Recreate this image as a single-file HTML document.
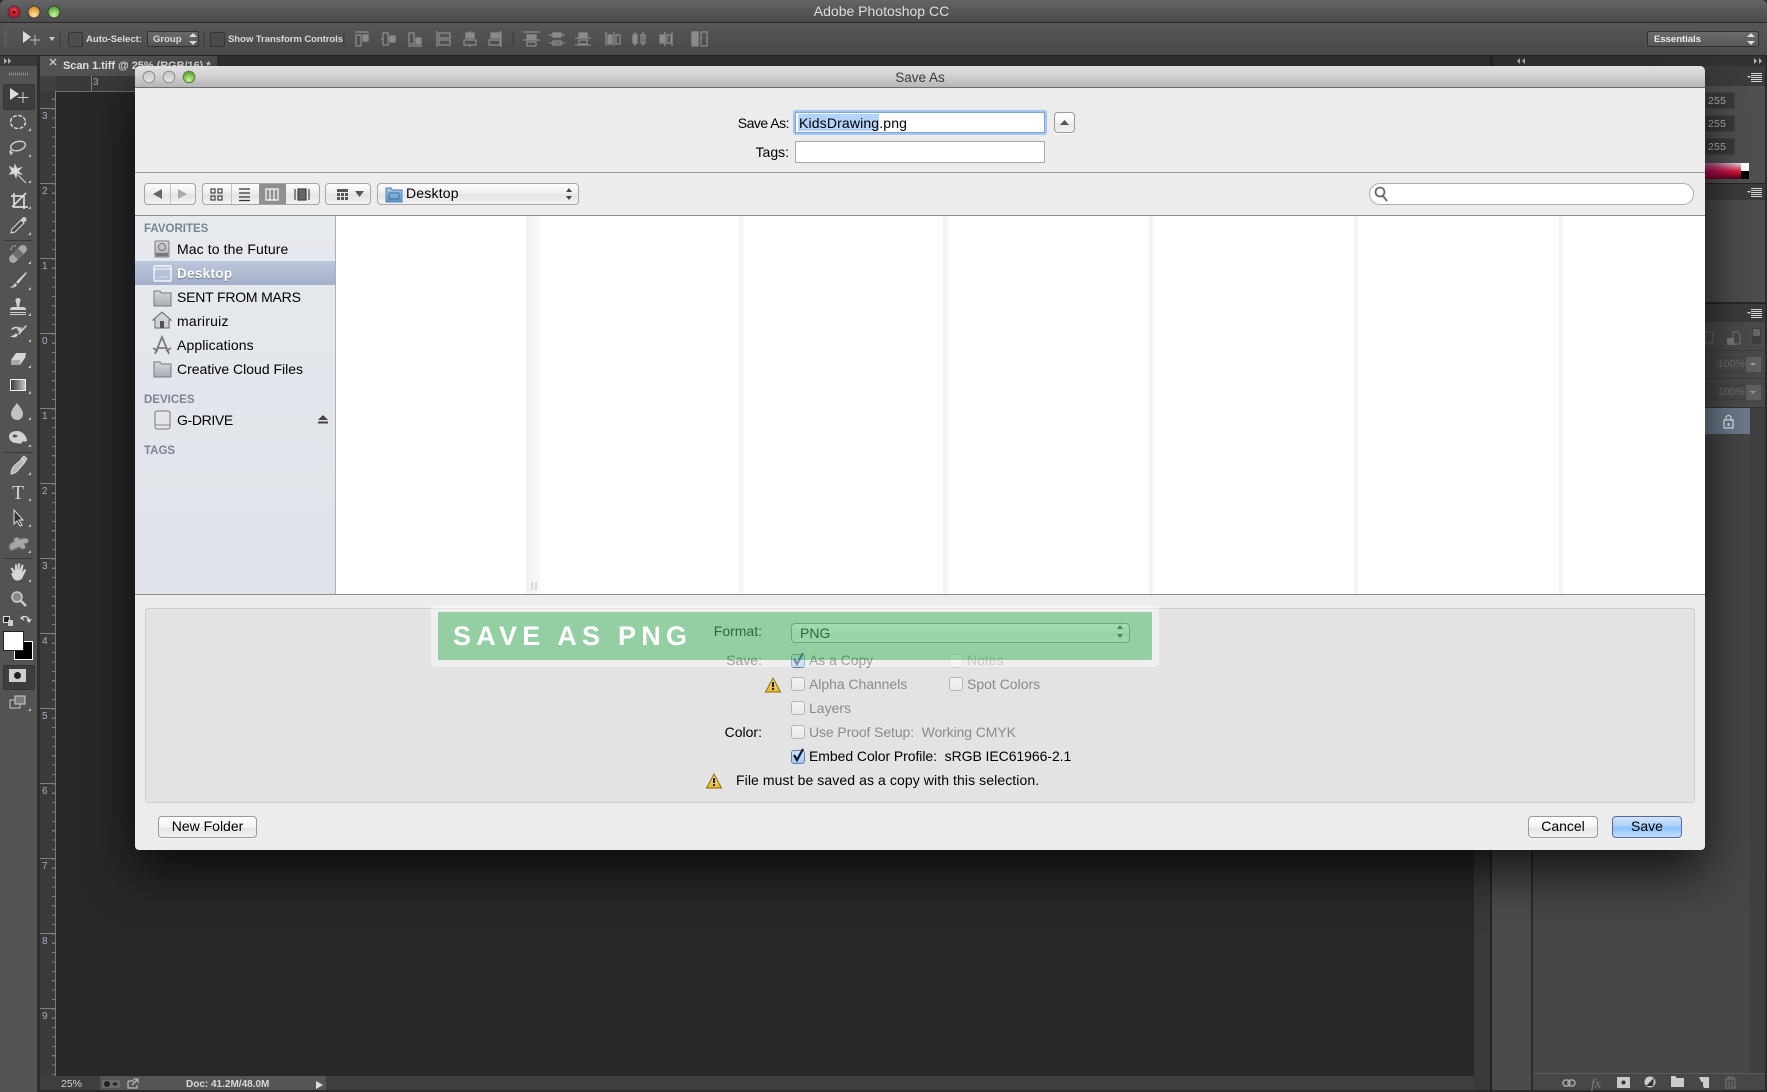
<!DOCTYPE html>
<html><head><meta charset="utf-8"><title>Adobe Photoshop CC - Save As</title>
<style>
html,body{margin:0;padding:0;background:#1c1c1c}
#p{position:relative;width:1767px;height:1092px;overflow:hidden;background:#2a2a2a;font-family:"Liberation Sans",sans-serif;font-size:14px;color:#000;filter:blur(.3px)}
#p div,#p svg{position:absolute}
.t{white-space:nowrap;line-height:16px;height:16px}
.o{font-size:9.6px;font-weight:bold;color:#dcdcdc;letter-spacing:-.05px}
.r{color:#9fb0c4;font-size:10px}
.s{font-size:14px;left:177px;color:#000;letter-spacing:.1px}
.h{font-size:11.5px;font-weight:bold;color:#7b8494;left:144px}
.l{text-align:right;right:1005px}
.g{color:#8b8b8b}
.cb{width:12px;height:12px;border:1px solid #b4b4b4;border-radius:3px;background:linear-gradient(#f4f4f4,#e8e8e8)}
.btn{border:1px solid #9a9a9a;border-radius:4px;background:linear-gradient(#fff,#f4f4f4 50%,#e6e6e6 55%,#f2f2f2);box-sizing:border-box;height:22px;text-align:center;line-height:18px;font-size:14px;color:#000;box-shadow:0 1px 0 rgba(255,255,255,.6)}
.seg{box-sizing:border-box;border:1px solid #a5a5a5;border-radius:4px;background:linear-gradient(#fdfdfd,#ececec 50%,#e2e2e2 52%,#f3f3f3);height:22px;top:183px}
.col{top:216px;height:378px;background:linear-gradient(90deg,#f1f1f1,#f9f9f9)}
.v{left:1705px;width:30px;height:17px;background:#3a3a3a;border:1px solid #474747;box-sizing:border-box;color:#b9b9b9;font-size:10.5px;line-height:16px;padding-left:2px;letter-spacing:.2px}
.pct{left:1713px;width:48px;height:15px;background:#4a4a4a;border:1px solid #404040;border-radius:2px;box-sizing:border-box;color:#6f6f6f;font-size:10.5px;line-height:13px;padding-left:4px}
</style></head>
<body><div id="p">

<!-- title bar -->
<div style="left:0;top:0;width:1767px;height:22px;background:linear-gradient(#646464,#4b4b4b);border-radius:5px 5px 0 0"></div>
<div style="left:0;top:22px;width:1767px;height:1px;background:#2a2a2a"></div>
<div class="t" style="left:0;width:1763px;text-align:center;top:3px;font-size:14px;color:#dedede">Adobe Photoshop CC</div>

<!-- options bar -->
<div style="left:0;top:23px;width:1767px;height:32px;background:linear-gradient(#575757,#4c4c4c)"></div>
<div style="left:0;top:55px;width:1767px;height:1px;background:#262626"></div>
<div style="left:68px;top:32px;width:13px;height:13px;background:#4d4d4d;border:1px solid #363636;border-radius:2px"></div>
<div class="t o" style="left:86px;top:32px">Auto-Select:</div>
<div style="left:147px;top:31px;width:52px;height:16px;box-sizing:border-box;background:linear-gradient(#6a6a6a,#585858);border:1px solid #333;border-radius:2px"></div>
<div class="t o" style="left:153px;top:32px">Group</div>
<div style="left:210px;top:32px;width:13px;height:13px;background:#4d4d4d;border:1px solid #363636;border-radius:2px"></div>
<div class="t o" style="left:228px;top:32px;letter-spacing:-.1px">Show Transform Controls</div>
<div style="left:1647px;top:31px;width:112px;height:16px;box-sizing:border-box;background:linear-gradient(#6c6c6c,#595959);border:1px solid #333;border-radius:2px"></div>
<div class="t o" style="left:1654px;top:32px;color:#eee">Essentials</div>

<!-- strip below options -->
<div style="left:0;top:56px;width:37px;height:10px;background:#3a3a3a"></div>
<div style="left:40px;top:56px;width:1450px;height:20px;background:#323232"></div>
<div style="left:1493px;top:56px;width:274px;height:10px;background:#333"></div>
<div style="left:40px;top:56px;width:177px;height:20px;background:#525252"></div>
<div class="t o" style="left:63px;top:58px;font-size:11px;color:#e0e0e0">Scan 1.tiff @ 25% (RGB/16) *</div>

<!-- left toolbar -->
<div style="left:0;top:66px;width:37px;height:1026px;background:#535353"></div>
<div style="left:37px;top:56px;width:3px;height:1036px;background:#2e2e2e"></div>
<div style="left:3px;top:84px;width:30px;height:24px;background:#3d3d3d;border:1px solid #343434;border-radius:2px"></div>
<div style="left:3px;top:665px;width:30px;height:23px;background:#3d3d3d;border:1px solid #343434;border-radius:2px"></div>
<div style="left:4px;top:240px;width:29px;height:1px;background:#383838"></div>
<div style="left:4px;top:452px;width:29px;height:1px;background:#383838"></div>
<div style="left:4px;top:558px;width:29px;height:1px;background:#383838"></div>
<div style="left:14px;top:641px;width:17px;height:17px;background:#000;border:1px solid #fff"></div>
<div style="left:3px;top:631px;width:19px;height:18px;background:#fff;border:1px solid #222"></div>

<!-- ruler -->
<div style="left:40px;top:76px;width:16px;height:1000px;background:#3a3a3a"></div>
<div style="left:56px;top:76px;width:1440px;height:15px;background:#3a3a3a"></div>
<div style="left:40px;top:76px;width:16px;height:15px;background:#404040"></div>
<div style="left:52px;top:91px;width:4px;height:985px;background:repeating-linear-gradient(#7a7a7a 0 1px,transparent 1px 9.375px);background-position:0 8px"></div>
<div style="left:40px;top:108px;width:16px;height:968px;background:repeating-linear-gradient(#808080 0 1px,transparent 1px 75px)"></div>
<div style="left:55px;top:91px;width:1px;height:985px;background:#7a7a7a"></div>
<div style="left:56px;top:91px;width:1440px;height:1px;background:#6e6e6e"></div>
<div style="left:91px;top:76px;width:1px;height:15px;background:#808080"></div>
<div class="t r" style="left:42px;top:109px">3</div>
<div class="t r" style="left:42px;top:184px">2</div>
<div class="t r" style="left:42px;top:259px">1</div>
<div class="t r" style="left:42px;top:334px">0</div>
<div class="t r" style="left:42px;top:409px">1</div>
<div class="t r" style="left:42px;top:484px">2</div>
<div class="t r" style="left:42px;top:559px">3</div>
<div class="t r" style="left:42px;top:634px">4</div>
<div class="t r" style="left:42px;top:709px">5</div>
<div class="t r" style="left:42px;top:784px">6</div>
<div class="t r" style="left:42px;top:859px">7</div>
<div class="t r" style="left:42px;top:934px">8</div>
<div class="t r" style="left:42px;top:1009px">9</div>
<div class="t r" style="left:93px;top:75px">3</div>

<!-- canvas area -->
<div style="left:56px;top:92px;width:1418px;height:984px;background:#282828"></div>
<div style="left:1474px;top:76px;width:16px;height:1014px;background:#3a3a3a"></div>
<div style="left:1490px;top:56px;width:2px;height:1036px;background:#252525"></div>
<div style="left:1492px;top:66px;width:39px;height:1024px;background:#4b4b4b"></div>
<div style="left:1531px;top:66px;width:2px;height:1026px;background:#2b2b2b"></div>

<!-- status bar -->
<div style="left:40px;top:1076px;width:1434px;height:14px;background:#3e3e3e"></div>
<div style="left:100px;top:1076px;width:226px;height:14px;background:#555"></div>
<div class="t" style="left:61px;top:1077px;font-size:10.5px;color:#d4d4d4;line-height:15px">25%</div>
<div class="t" style="left:186px;top:1077px;font-size:10px;font-weight:bold;color:#d8d8d8;line-height:15px">Doc: 41.2M/48.0M</div>

<!-- right panels -->
<div style="left:1533px;top:66px;width:232px;height:1024px;background:#464646"></div>
<div style="left:1765px;top:56px;width:2px;height:1036px;background:#2c2c2c"></div>
<div style="left:1533px;top:66px;width:232px;height:20px;background:#3c3c3c"></div>
<div style="left:1533px;top:86px;width:232px;height:97px;background:#505050"></div>
<div style="left:1533px;top:183px;width:232px;height:1px;background:#262626"></div>
<div style="left:1533px;top:184px;width:232px;height:16px;background:#3c3c3c"></div>
<div style="left:1533px;top:200px;width:232px;height:102px;background:linear-gradient(90deg,#3f3f3f,#4e4e4e)"></div>
<div style="left:1533px;top:302px;width:232px;height:2px;background:#272727"></div>
<div style="left:1533px;top:304px;width:232px;height:18px;background:#3c3c3c"></div>
<div style="left:1533px;top:322px;width:232px;height:85px;background:#4a4a4a"></div>
<div style="left:1533px;top:350px;width:232px;height:1px;background:#3c3c3c"></div>
<div style="left:1533px;top:378px;width:232px;height:1px;background:#3c3c3c"></div>
<div style="left:1533px;top:407px;width:232px;height:1px;background:#333"></div>
<div style="left:1533px;top:408px;width:217px;height:26px;background:#6c7a8c"></div>
<div style="left:1750px;top:408px;width:15px;height:665px;background:#3f3f3f"></div>
<div style="left:1533px;top:1073px;width:232px;height:17px;background:#474747;border-top:1px solid #5c5c5c;box-sizing:border-box"></div>
<div class="v" style="top:92px">255</div>
<div class="v" style="top:115px">255</div>
<div class="v" style="top:138px">255</div>
<div style="left:1560px;top:163px;width:189px;height:16px;background:linear-gradient(#eee,#e81f3c 50%,#4a0012);"></div>
<div style="left:1560px;top:163px;width:181px;height:16px;background:linear-gradient(90deg,rgba(90,0,120,1),rgba(150,0,90,.55) 85%,rgba(255,0,0,0));"></div>
<div style="left:1741px;top:163px;width:8px;height:8px;background:#fff"></div>
<div style="left:1741px;top:171px;width:8px;height:8px;background:#000"></div>
<div style="left:1752px;top:328px;width:9px;height:16px;background:#3d3d3d;border:1px solid #404040;box-sizing:border-box"></div>
<div style="left:1753px;top:329px;width:7px;height:7px;background:#666"></div>
<div class="pct" style="top:357px">100%</div>
<div class="pct" style="top:385px">100%</div>
<div style="left:1746px;top:357px;width:15px;height:15px;background:#606060"></div>
<div style="left:1746px;top:385px;width:15px;height:15px;background:#606060"></div>

<!-- base icons -->
<svg style="left:0;top:0" width="1767" height="1092" viewBox="0 0 1767 1092">
<defs>
<radialGradient id="rd" cx=".5" cy=".4" r=".6"><stop offset="0" stop-color="#ff8a9a"/><stop offset=".35" stop-color="#d8203a"/><stop offset="1" stop-color="#a3162a"/></radialGradient>
<radialGradient id="yl" cx=".5" cy=".75" r=".7"><stop offset="0" stop-color="#ffe39a"/><stop offset="1" stop-color="#d88a24"/></radialGradient>
<radialGradient id="gn" cx=".5" cy=".75" r=".7"><stop offset="0" stop-color="#c8f59a"/><stop offset="1" stop-color="#4ea32c"/></radialGradient>
<linearGradient id="gr" x1="0" x2="1"><stop offset="0" stop-color="#333"/><stop offset="1" stop-color="#ccc"/></linearGradient>
</defs>
<circle cx="14" cy="12" r="6" fill="url(#rd)" stroke="#3a3a3a"/><circle cx="14" cy="12" r="1.6" fill="#5a0410"/>
<circle cx="34" cy="12" r="6" fill="url(#yl)" stroke="#3a3a3a"/>
<circle cx="54" cy="12" r="6" fill="url(#gn)" stroke="#3a3a3a"/>
<!-- options icons -->
<path d="M4.500 30v17M6.500 30v17" stroke="#6e6e6e" stroke-dasharray="1 1" fill="none"/>
<g fill="#9a9a9a" stroke="none">
<polygon points="23,31 23,43 31,37" fill="#dcdcdc"/>
<path d="M35 35v10M30 40h10" stroke="#bbb" fill="none"/>
<polygon points="49,37 55,37 52,41" fill="#ccc"/>
<polygon points="189,37 193,33 197,37" fill="#ddd"/><polygon points="189,41 197,41 193,45" fill="#ddd"/>
<polygon points="1747,37 1751,33 1755,37" fill="#ddd"/><polygon points="1747,41 1755,41 1751,45" fill="#ddd"/>
</g>
<path d="M60 31v16M204 31v16M344 31v16M513 31v16" stroke="#3c3c3c"/>
<g fill="none" stroke="#8d8d8d" stroke-width="1.3">
<path d="M355 32h14"/><rect x="356" y="35" width="5" height="11"/><rect x="363" y="35" width="5" height="6" fill="#8d8d8d"/>
<path d="M381 39h15"/><rect x="383" y="33" width="5" height="12" fill="#4f4f4f"/><rect x="390" y="36" width="5" height="6" fill="#8d8d8d"/>
<path d="M408 46h14"/><rect x="409" y="33" width="5" height="11"/><rect x="416" y="38" width="5" height="6" fill="#8d8d8d"/>
<path d="M437 31v16"/><rect x="439" y="33" width="11" height="5" fill="none"/><rect x="439" y="40" width="11" height="5"/>
<path d="M470 31v16"/><rect x="466" y="33" width="8" height="5" fill="#8d8d8d"/><rect x="464" y="40" width="12" height="5" fill="#4f4f4f"/>
<path d="M501 31v16"/><rect x="491" y="33" width="9" height="5" fill="#8d8d8d"/><rect x="489" y="40" width="11" height="5"/>
<path d="M523 32h17"/><rect x="527" y="35" width="9" height="4" fill="#8d8d8d"/><path d="M523 40h17"/><rect x="527" y="42" width="9" height="4"/>
<path d="M549 35h16M549 43h16"/><rect x="553" y="33" width="8" height="4" fill="#8d8d8d"/><rect x="553" y="41" width="8" height="4"/>
<path d="M575 45h16M575 38h16"/><rect x="579" y="33" width="8" height="4" fill="#8d8d8d"/><rect x="579" y="40" width="8" height="4"/>
<path d="M606 32v14"/><rect x="608" y="35" width="4" height="9" fill="#8d8d8d"/><path d="M614 32v14"/><rect x="616" y="35" width="4" height="9"/>
<path d="M635 32v14M643 32v14"/><rect x="633" y="35" width="4" height="8" fill="#8d8d8d"/><rect x="641" y="35" width="4" height="8"/>
<path d="M665 32v14M672 32v14"/><rect x="660" y="35" width="4" height="8" fill="#8d8d8d"/><rect x="667" y="35" width="4" height="8"/>
<rect x="692" y="32" width="6" height="14" fill="#8d8d8d"/><rect x="701" y="32" width="6" height="14"/>
</g>
<!-- strip glyphs -->
<g fill="#b5b5b5">
<polygon points="4,58 4,64 7,61"/><polygon points="8,58 8,64 11,61"/>
<polygon points="1520,58 1520,64 1517,61"/><polygon points="1525,58 1525,64 1522,61"/>
<polygon points="1754,58 1754,64 1757,61"/><polygon points="1759,58 1759,64 1762,61"/>
</g>
<path d="M50 62l6 6M56 62l-6 6" stroke="#ccc" stroke-width="1.3" fill="none" transform="translate(0,-3)"/>
<path d="M9 74h19" stroke="#8d8d8d" stroke-width="3" stroke-dasharray="1 1"/>
<!-- tool icons -->
<polygon points="10,88 10,100 19,94" fill="#dcdcdc"/>
<path d="M23 92v11M17.500 97.500h11" stroke="#d0d0d0" fill="none"/>
<g fill="#bdbdbd"><polygon points="31,131 28,131 31,128"/><polygon points="31,157 28,157 31,154"/><polygon points="31,183 28,183 31,180"/><polygon points="31,209 28,209 31,206"/><polygon points="31,235 28,235 31,232"/><polygon points="31,264 28,264 31,261"/><polygon points="31,290 28,290 31,287"/><polygon points="31,316 28,316 31,313"/><polygon points="31,342 28,342 31,339"/><polygon points="31,368 28,368 31,365"/><polygon points="31,394 28,394 31,391"/><polygon points="31,420 28,420 31,417"/><polygon points="31,447 28,447 31,444"/><polygon points="31,475 28,475 31,472"/><polygon points="31,501 28,501 31,498"/><polygon points="31,527 28,527 31,524"/><polygon points="31,553 28,553 31,550"/><polygon points="31,582 28,582 31,579"/><polygon points="31,711 28,711 31,708"/></g>
<ellipse cx="18" cy="122" rx="7.500" ry="6.500" fill="none" stroke="#e4e4e4" stroke-width="1.300" stroke-dasharray="4 1.500"/>
<g fill="none" stroke="#c8c8c8" stroke-width="1.500"><ellipse cx="18" cy="146" rx="7.500" ry="4.500" transform="rotate(-15 18 146)"/><path d="M11 150c-2 2 0 4 1 3s-2-2-1 2"/></g>
<path d="M10 167l4 2 1-4 2 4 4-1-3 3 3 3-4-1-1 4-2-4-4 1 2-3zM18 175l8 8" fill="#dedede" stroke="#cfcfcf" stroke-width="1.200"/>
<path d="M14 193v14h14M11 196h13v13M26 193l-14 14" fill="none" stroke="#d8d8d8" stroke-width="1.700"/>
<path d="M11 233l1-4 9-9 3 3-9 9z" fill="#4a4a4a" stroke="#ddd"/><circle cx="24" cy="219.500" r="2.500" fill="#ccc"/>
<g transform="rotate(-45 18 254)"><rect x="7" y="250" width="22" height="8" rx="4" fill="#a8a8a8"/><rect x="14" y="250" width="8" height="8" fill="#6e6e6e"/></g>
<path d="M11 250a4 4 0 0 1 5-4" stroke="#ddd" fill="none" stroke-dasharray="1.500 1.500"/>
<path d="M9 287c3 0 4-1 6-4l2 2c-2 3-5 3-8 2zM16 282l10-10 1 1-9 11z" fill="#cfcfcf"/>
<g transform="translate(0,2)"><path d="M16 300a2.500 2.500 0 1 1 4 0l-1 5h4c2 0 3 1 3 3H10c0-2 1-3 3-3h4zM10 310h16v1H10zM10 312h16v1H10z" fill="#d2d2d2"/></g>
<g transform="translate(0,2)"><path d="M10 334c3 0 4-1 6-3l2 2c-2 3-5 3-8 1zM18 331l8-8 1 1-8 9zM11 327c3-3 6-3 9-1l1-2 1 5-5 0 1-2c-2-1-4-1-5 1z" fill="#cfcfcf"/></g>
<g transform="translate(0,2)"><polygon points="11,356 16,349 26,349 25,354 20,361 11,361" fill="#d6d6d6" transform="translate(0,2)"/><polygon points="11,358 20,358 20,363 11,363" fill="#a8a8a8"/></g>
<rect x="10.500" y="379.500" width="15" height="11" fill="url(#gr)" stroke="#eee"/>
<path d="M17 403c3 4 6 7 6 11a6 6 0 0 1-12 0c0-4 3-7 6-11z" fill="#c2c2c2"/>
<g transform="translate(0,3)"><path d="M9 433c0-3 4-5 8-5 5 0 9 4 10 9 0 2-2 2-4 1-1 3-4 3-7 2-4 0-7-3-7-7z" fill="#d2d2d2"/><ellipse cx="15" cy="433" rx="2.500" ry="1.500" fill="#555"/></g>
<g transform="translate(0,1)"><path d="M11 473c0-4 2-7 4-9l7-6 3 3-6 7c-2 3-5 5-8 5zM21 458l3-3 3 3-3 3" fill="#b5b5b5" stroke="#ddd" stroke-width="1"/></g>
<text x="18" y="499" text-anchor="middle" font-family="Liberation Serif,serif" font-size="20" fill="#cfcfcf">T</text>
<path d="M14 510v14l3-3 3 5 2-1-3-5 4 0z" fill="#333" stroke="#ddd"/>
<g transform="translate(-5.500,-40.500) scale(1.300 1.080)"><path d="M12 541l3-2c-1-3 2-5 4-3l1 1c2-2 5-1 6 0 1 2-1 4-3 4l1 3c-1 3-4 2-5 0-2 1-4 3-6 3-2-1-2-4-1-6z" fill="#a6a6a6" stroke="#777"/></g>
<g transform="translate(2,3)"><path d="M11 570l-2-4c-1-1 1-2 2-1l2 3v-6c0-1 2-1 2 0v5l1-6c0-1 2-1 2 0l-.500 6 2-5c.500-1 2-.500 2 .500l-1.500 7 2-3c1-1 2 0 2 1l-3 6c-1 3-3 4-6 4s-4-2-6-7z" fill="#d4d4d4"/></g>
<circle cx="17" cy="597" r="5" fill="#8a8a8a" stroke="#cdcdcd" stroke-width="1.500"/><path d="M21 601l5 5" stroke="#cdcdcd" stroke-width="2.500"/>
<rect x="3.500" y="616.500" width="6" height="6" fill="#222" stroke="#ddd"/><rect x="8" y="620" width="5" height="6" fill="#ccc"/>
<path d="M22 618c3-3 7-1 7 3M27 619l2 3 2-3M24 616l-3 2 3 2" fill="none" stroke="#ddd" stroke-width="1.200"/>
<rect x="9" y="669" width="17" height="13" fill="#d0d0d0"/><circle cx="17.500" cy="675.500" r="3.500" fill="#222"/>
<rect x="10" y="700" width="10" height="8" fill="none" stroke="#c8c8c8"/><rect x="15" y="696" width="10" height="8" fill="#7a7a7a" stroke="#d0d0d0"/>
<!-- status -->
<rect x="102" y="1080" width="18" height="8" fill="#6a6a6a" rx="1"/><circle cx="107" cy="1084" r="3" fill="#222"/><path d="M112 1084l3-2v4zM118 1084l-3-2v4z" fill="#222"/>
<path d="M128 1081h6M128 1081v7h9v-3M132 1085l5-5M133 1079h5v4" fill="none" stroke="#ccc"/>
<polygon points="316,1081 316,1089 323,1085" fill="#ddd"/>
<!-- panel glyphs -->
<g fill="#d8d8d8">
<path d="M1751 73h11v1h-11zM1751 75h11v1h-11zM1751 77h11v1h-11zM1751 79h11v1h-11zM1751 81h11v1h-11zM1747 76h4l-2 2z"/>
<path d="M1751 188h11v1h-11zM1751 190h11v1h-11zM1751 192h11v1h-11zM1751 194h11v1h-11zM1751 196h11v1h-11zM1747 191h4l-2 2z"/>
<path d="M1751 309h11v1h-11zM1751 311h11v1h-11zM1751 313h11v1h-11zM1751 315h11v1h-11zM1751 317h11v1h-11zM1747 312h4l-2 2z"/>
</g>
<polygon points="1750,363 1756,363 1753,366" fill="#999"/><polygon points="1750,391 1756,391 1753,394" fill="#999"/>
<rect x="1705" y="332" width="8" height="11" fill="none" stroke="#6a6a6a"/>
<path d="M1733 332h5l2 3v9h-7z" fill="none" stroke="#777"/><rect x="1727" y="338" width="7" height="7" fill="#777"/>
<rect x="1724" y="420" width="9" height="8" fill="none" stroke="#dfe4ea" stroke-width="1.300"/><path d="M1726 420v-2a2.500 2.500 0 0 1 5 0v2" fill="none" stroke="#dfe4ea" stroke-width="1.300"/><rect x="1727.500" y="423" width="2" height="3" fill="#dfe4ea"/>
<!-- bottom layer icons -->
<g fill="none" stroke="#a8a8a8" stroke-width="1.500"><rect x="1563" y="1080" width="7" height="6" rx="3"/><rect x="1568" y="1080" width="7" height="6" rx="3"/></g>
<text x="1591" y="1088" font-family="Liberation Serif,serif" font-style="italic" font-size="14" fill="#7d7d7d">fx</text>
<rect x="1617" y="1077" width="13" height="11" fill="#c8c8c8"/><circle cx="1623.500" cy="1082.500" r="2" fill="#333"/>
<circle cx="1650" cy="1082" r="5.500" fill="#ccc"/><path d="M1646 1086l8-8-1 8z" fill="#333"/>
<path d="M1671 1087v-11h4l2 2h7v9z" fill="#ccc"/>
<path d="M1699 1077h10v11h-5z" fill="#ccc"/><path d="M1699 1082h4v5z" fill="#444"/>
<path d="M1725 1079h11M1728 1079v-2h5v2M1726 1080v8h9v-8M1729 1081v6M1732 1081v6" fill="none" stroke="#777"/>
</svg>

<!-- DIALOG -->
<div style="left:135px;top:66px;width:1570px;height:784px;background:#ececec;border-radius:5px 5px 4px 4px;box-shadow:0 22px 50px rgba(0,0,0,.72)"></div>
<div style="left:135px;top:66px;width:1570px;height:21px;background:linear-gradient(#e2e2e2,#cfcfcf 50%,#b6b6b6);border-radius:5px 5px 0 0"></div>
<div style="left:135px;top:87px;width:1570px;height:1px;background:#6f6f6f"></div>
<div class="t" style="left:135px;width:1570px;top:70px;text-align:center;font-size:13.5px;color:#3a3a3a">Save As</div>

<div class="t l" style="top:115px;right:978px;letter-spacing:-.5px">Save As:</div>
<div style="left:795px;top:112px;width:250px;height:21px;box-sizing:border-box;background:#fff;border:1px solid #7aa7e2;box-shadow:0 0 0 2px #a5c5ef;border-radius:1px"></div>
<div style="left:798px;top:114px;width:81px;height:17px;background:#b3d3fb"></div>
<div class="t" style="left:799px;top:115px;letter-spacing:.15px">KidsDrawing.png</div>
<div class="btn" style="left:1054px;top:112px;width:21px;height:21px"></div>
<div class="t l" style="top:144px;right:978px">Tags:</div>
<div style="left:795px;top:141px;width:250px;height:22px;box-sizing:border-box;background:#fff;border:1px solid #aaa"></div>

<div style="left:135px;top:172px;width:1570px;height:1px;background:#9a9a9a"></div>
<div style="left:135px;top:215px;width:1570px;height:1px;background:#8f8f8f"></div>
<div class="seg" style="left:144px;width:52px"></div>
<div style="left:170px;top:184px;width:1px;height:20px;background:#c4c4c4"></div>
<div class="seg" style="left:202px;width:118px"></div>
<div style="left:259px;top:184px;width:27px;height:20px;background:#8f8f8f"></div>
<div style="left:231px;top:184px;width:1px;height:20px;background:#c4c4c4"></div>
<div class="seg" style="left:325px;width:46px"></div>
<div class="seg" style="left:377px;width:202px"></div>
<div class="t" style="left:406px;top:185px;letter-spacing:.2px">Desktop</div>
<div style="left:1369px;top:183px;width:325px;height:22px;box-sizing:border-box;background:#fff;border:1px solid #adadad;border-radius:11px"></div>

<!-- sidebar -->
<div style="left:135px;top:216px;width:200px;height:378px;background:linear-gradient(#e6e9ee,#dfe3e9)"></div>
<div style="left:335px;top:216px;width:1px;height:378px;background:#b0b0b0"></div>
<div style="left:135px;top:261px;width:200px;height:24px;background:linear-gradient(#bcc6dc,#a3aeca)"></div>
<div class="t h" style="top:221px">FAVORITES</div>
<div class="t s" style="top:241px">Mac to the Future</div>
<div class="t s" style="top:266px;color:#fff;font-weight:bold;text-shadow:0 1px 1px rgba(60,70,100,.6);font-size:13.5px;letter-spacing:.3px">Desktop</div>
<div class="t s" style="top:289px;letter-spacing:-.2px">SENT FROM MARS</div>
<div class="t s" style="top:313px;letter-spacing:.25px">mariruiz</div>
<div class="t s" style="top:337px">Applications</div>
<div class="t s" style="top:361px;letter-spacing:0">Creative Cloud Files</div>
<div class="t h" style="top:392px">DEVICES</div>
<div class="t s" style="top:412px;letter-spacing:-.35px">G-DRIVE</div>
<div class="t h" style="top:443px">TAGS</div>

<!-- browser columns -->
<div style="left:336px;top:216px;width:1369px;height:378px;background:#fff"></div>
<div class="col" style="left:526px;width:14px"></div>
<div class="col" style="left:739px;width:5px"></div>
<div class="col" style="left:943px;width:5px"></div>
<div class="col" style="left:1149px;width:5px"></div>
<div class="col" style="left:1354px;width:5px"></div>
<div class="col" style="left:1559px;width:5px"></div>
<div style="left:135px;top:594px;width:1570px;height:1px;background:#8f8f8f"></div>

<!-- accessory panel -->
<div style="left:145px;top:608px;width:1550px;height:195px;box-sizing:border-box;background:#e3e3e3;border:1px solid #cdcdcd;border-radius:3px"></div>
<div class="t l" style="top:623px;color:#000">Format:</div>
<div style="left:791px;top:623px;width:339px;height:20px;box-sizing:border-box;background:linear-gradient(#fff,#f2f2f2 50%,#e8e8e8 52%,#f6f6f6);border:1px solid #8e8e8e;border-radius:4px"></div>
<div class="t" style="left:800px;top:625px">PNG</div>
<div class="t l" style="top:652px;color:#5f5f5f">Save:</div>
<div class="cb" style="left:791px;top:654px;background:linear-gradient(#cfe3fb,#9cc3ef);border-color:#6a7fa5"></div>
<div class="t" style="left:809px;top:652px;letter-spacing:-.05px;color:#5f5f5f">As a Copy</div>
<div class="cb" style="left:949px;top:654px;border-color:#cfcfcf"></div>
<div class="t" style="left:967px;top:652px;color:#a8a8a8">Notes</div>
<div class="cb" style="left:791px;top:677px"></div>
<div class="t g" style="left:809px;top:676px;letter-spacing:-.05px">Alpha Channels</div>
<div class="cb" style="left:949px;top:677px"></div>
<div class="t g" style="left:967px;top:676px">Spot Colors</div>
<div class="cb" style="left:791px;top:701px"></div>
<div class="t g" style="left:809px;top:700px">Layers</div>
<div class="t l" style="top:724px">Color:</div>
<div class="cb" style="left:791px;top:725px"></div>
<div class="t g" style="left:809px;top:724px;letter-spacing:-.1px">Use Proof Setup:&nbsp; Working CMYK</div>
<div class="cb" style="left:791px;top:750px;background:linear-gradient(#d4e6fb,#a3c9f2);border-color:#6a7fa5"></div>
<div class="t" style="left:809px;top:748px;letter-spacing:-.06px">Embed Color Profile:&nbsp; sRGB IEC61966-2.1</div>
<div class="t" style="left:736px;top:772px;letter-spacing:.09px">File must be saved as a copy with this selection.</div>

<!-- dialog buttons -->
<div class="btn" style="left:158px;top:816px;width:99px">New Folder</div>
<div class="btn" style="left:1528px;top:816px;width:70px">Cancel</div>
<div class="btn" style="left:1612px;top:816px;width:70px;border-color:#5f62ad;background:linear-gradient(#d3e6fc,#a9d0fa 45%,#8cc0f6 55%,#c4e2ff)">Save</div>

<!-- dialog icons -->
<svg style="left:0;top:0" width="1767" height="1092" viewBox="0 0 1767 1092">
<defs>
<linearGradient id="fd" x1="0" y1="0" x2="0" y2="1"><stop offset="0" stop-color="#d6d8dc"/><stop offset="1" stop-color="#a9adb4"/></linearGradient>
<linearGradient id="fb" x1="0" y1="0" x2="0" y2="1"><stop offset="0" stop-color="#a7cbe8"/><stop offset="1" stop-color="#5d93c4"/></linearGradient>
<linearGradient id="wn" x1="0" y1="0" x2="0" y2="1"><stop offset="0" stop-color="#fbe58a"/><stop offset="1" stop-color="#e6b52c"/></linearGradient>
<radialGradient id="g2" cx=".5" cy=".75" r=".7"><stop offset="0" stop-color="#c8f59a"/><stop offset="1" stop-color="#4ea32c"/></radialGradient>
<linearGradient id="t2" x1="0" y1="0" x2="0" y2="1"><stop offset="0" stop-color="#c4c4c4"/><stop offset="1" stop-color="#e6e6e6"/></linearGradient>
</defs>
<circle cx="149" cy="77" r="5.800" fill="url(#t2)" stroke="#8e8e8e"/>
<circle cx="169" cy="77" r="5.800" fill="url(#t2)" stroke="#8e8e8e"/>
<circle cx="189" cy="77" r="5.800" fill="url(#g2)" stroke="#5d7a4a"/>
<polygon points="1060,125 1069,125 1064.500,120" fill="#555"/>
<!-- toolbar glyphs -->
<polygon points="153,194 162,189 162,199" fill="#666"/>
<polygon points="178,189 178,199 187,194" fill="#aaa"/>
<g fill="none" stroke="#444" stroke-width="1.200">
<rect x="211" y="189" width="4" height="4"/><rect x="218" y="189" width="4" height="4"/><rect x="211" y="196" width="4" height="4"/><rect x="218" y="196" width="4" height="4"/>
<path d="M239 189h11M239 193h11M239 197h11M239 200.500h11" stroke="#333"/>
</g>
<g fill="none" stroke="#fff" stroke-width="1.200"><rect x="266" y="189" width="12" height="11"/><path d="M270 189v11M274 189v11"/></g>
<g fill="none" stroke="#444" stroke-width="1.200"><path d="M295 189v11M309 189v11"/><rect x="298" y="189" width="8" height="11" fill="#666"/></g>
<g fill="#555"><rect x="337" y="189" width="11" height="3"/><rect x="337" y="193" width="3" height="3"/><rect x="341" y="193" width="3" height="3"/><rect x="345" y="193" width="3" height="3"/><rect x="337" y="197" width="3" height="3"/><rect x="341" y="197" width="3" height="3"/><rect x="345" y="197" width="3" height="3"/><polygon points="355,191 364,191 359.500,197"/></g>
<path d="M386 188h5l1.500 2H402v12h-16z" fill="url(#fb)" stroke="#5585b0"/><rect x="389" y="193" width="10" height="6" fill="none" stroke="#3d6f9d"/>
<g fill="#444"><polygon points="566,192 572,192 569,188"/><polygon points="566,196 572,196 569,200"/></g>
<circle cx="1380" cy="192" r="4.500" fill="none" stroke="#6a6a6a" stroke-width="1.800"/><path d="M1383 196l4 5" stroke="#6a6a6a" stroke-width="2"/>
<!-- sidebar icons -->
<rect x="155" y="241" width="14" height="16" rx="1" fill="url(#fd)" stroke="#7c7c7c"/><circle cx="162" cy="247" r="3.500" fill="none" stroke="#777"/><rect x="156" y="253" width="12" height="3" fill="#777"/>
<rect x="154" y="266" width="17" height="15" rx="1" fill="#b7c0d8" stroke="#fff" stroke-width="1.200"/><path d="M154 269h17" stroke="#fff"/><path d="M158 277h9" stroke="#fff" stroke-dasharray="1 1"/>
<path d="M154 291h6l1.500 2H171v13h-17z" fill="url(#fd)" stroke="#777"/>
<path d="M154 362h6l1.500 2H171v13h-17z" fill="url(#fd)" stroke="#777"/>
<path d="M153 320l9-8 9 8h-2v8h-14v-8z" fill="#cfd2d6" stroke="#666"/><rect x="160" y="321" width="4" height="7" fill="#555"/>
<path d="M155 354l7-17 7 17M157.500 348h9.500M153 348l5 3M171 348l-5 3" fill="none" stroke="#7a7a7a" stroke-width="1.800"/>
<rect x="155" y="411" width="15" height="18" rx="2" fill="#e4e5e7" stroke="#777"/><path d="M155 425h15" stroke="#8a8a8a"/>
<polygon points="318,420 328,420 323,415" fill="#444"/><rect x="318" y="421.500" width="10" height="2" fill="#444"/>
<!-- accessory glyphs -->
<g fill="#444"><polygon points="1117,629 1123,629 1120,625"/><polygon points="1117,634 1123,634 1120,638"/></g>
<path d="M794 659l3 5 6-11" fill="none" stroke="#1f3c6e" stroke-width="2.200"/>
<path d="M794 755l3 5 6-11" fill="none" stroke="#111a30" stroke-width="2.200"/>
<polygon points="773,678 780.500,692 765.500,692" fill="url(#wn)" stroke="#8a6f10"/><rect x="772" y="682" width="2" height="5" fill="#222"/><rect x="772" y="688" width="2" height="2" fill="#222"/>
<polygon points="714,774 721.500,788 706.500,788" fill="url(#wn)" stroke="#8a6f10"/><rect x="713" y="778" width="2" height="5" fill="#222"/><rect x="713" y="784" width="2" height="2" fill="#222"/>
<path d="M532 582v8M536 582v8" stroke="#bdbdbd" fill="none"/>
</svg>

<!-- green annotation -->
<div style="left:438px;top:612px;width:714px;height:48px;background:rgba(80,190,110,.545);box-shadow:0 0 0 7px rgba(255,255,255,.42);border-radius:1px"></div>
<div class="t" style="left:453px;top:622px;height:28px;line-height:28px;font-size:27px;font-weight:bold;color:#fff;letter-spacing:5.250px">SAVE AS PNG</div>

</div></body></html>
